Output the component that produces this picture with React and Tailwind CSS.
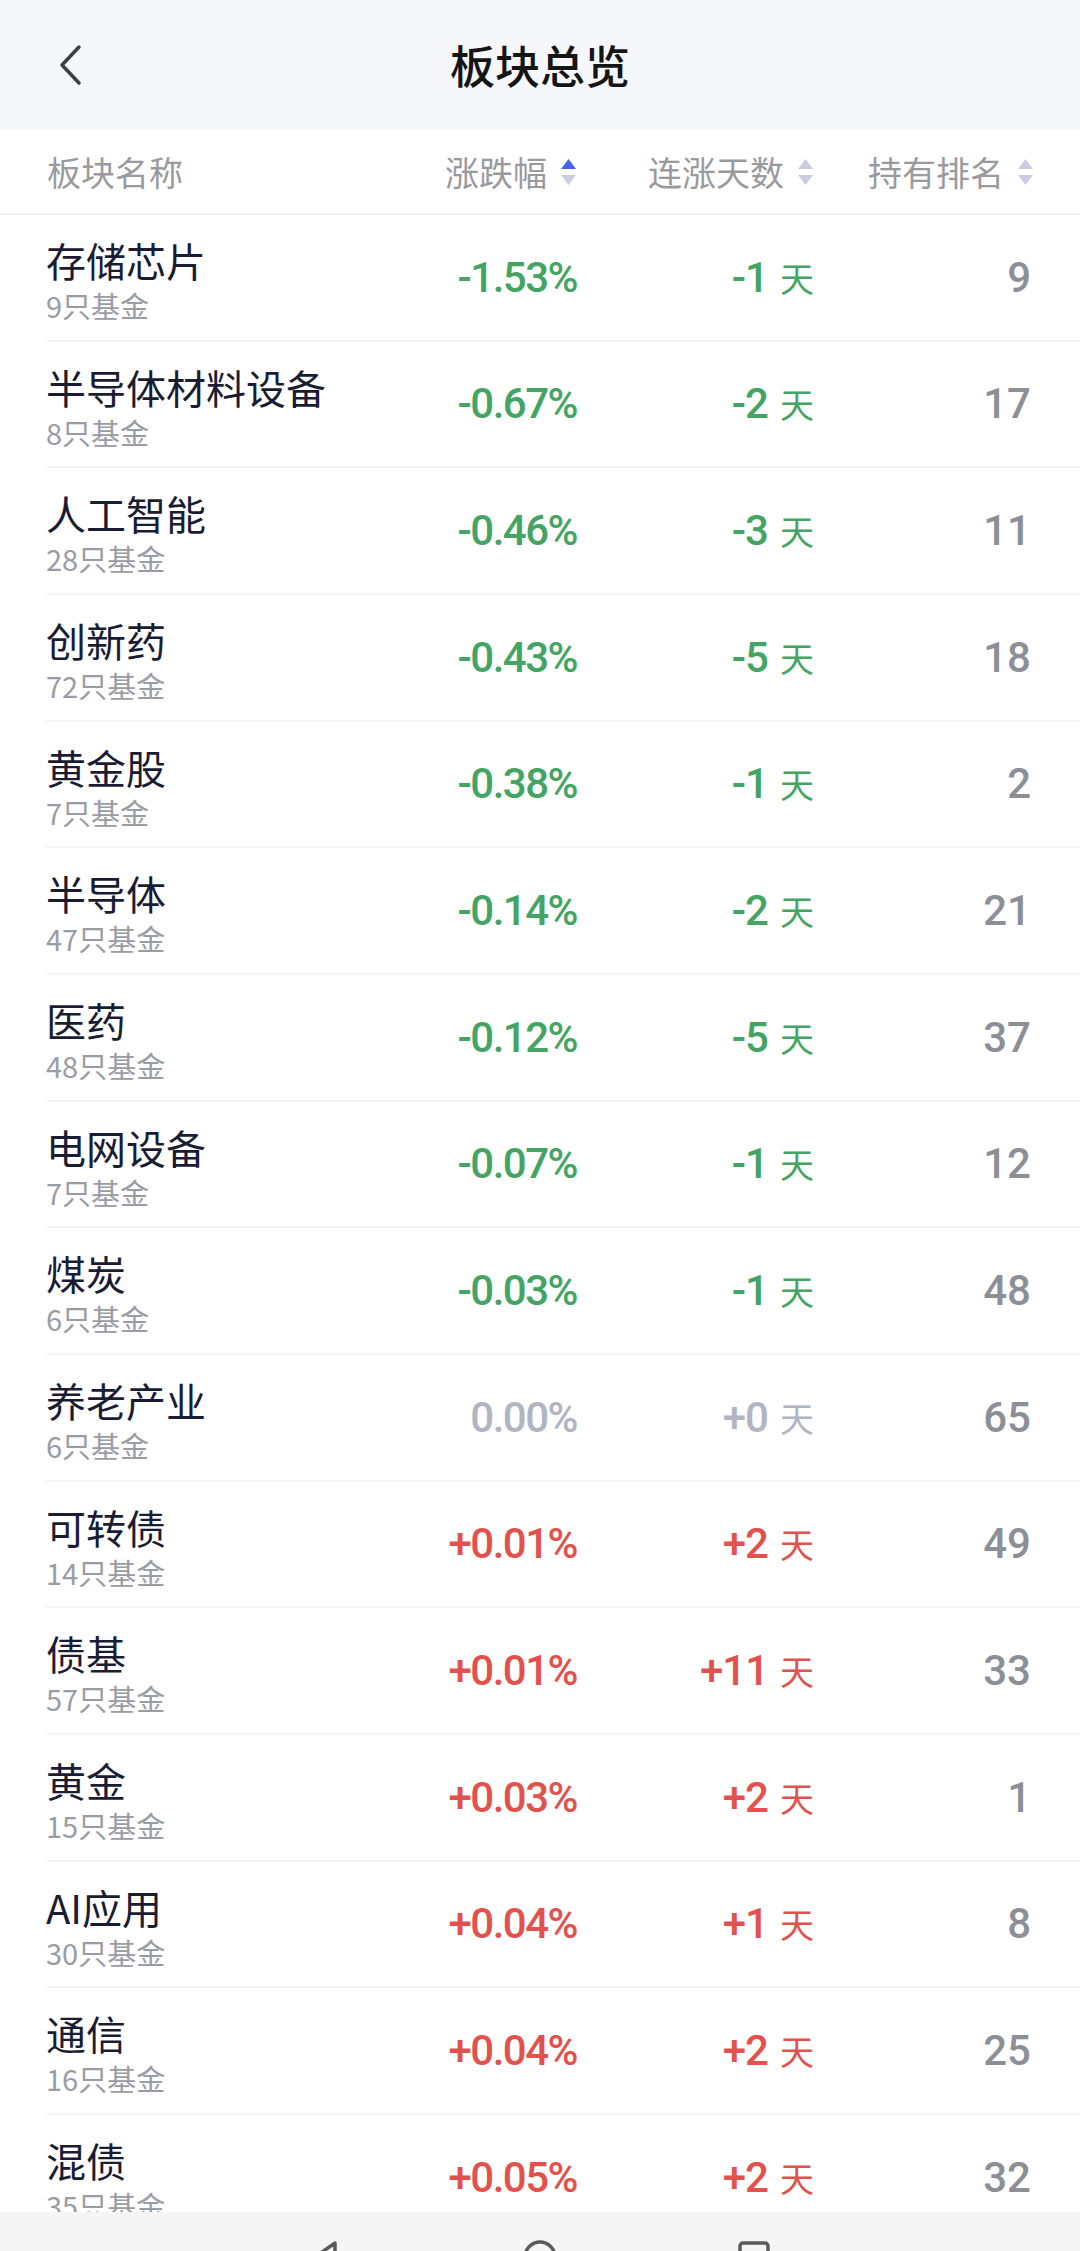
import React from 'react'

const rows = [
    ['存储芯片', '9只基金', '-1.53%', '-1', '9'],
    ['半导体材料设备', '8只基金', '-0.67%', '-2', '17'],
    ['人工智能', '28只基金', '-0.46%', '-3', '11'],
    ['创新药', '72只基金', '-0.43%', '-5', '18'],
    ['黄金股', '7只基金', '-0.38%', '-1', '2'],
    ['半导体', '47只基金', '-0.14%', '-2', '21'],
    ['医药', '48只基金', '-0.12%', '-5', '37'],
    ['电网设备', '7只基金', '-0.07%', '-1', '12'],
    ['煤炭', '6只基金', '-0.03%', '-1', '48'],
    ['养老产业', '6只基金', '0.00%', '+0', '65'],
    ['可转债', '14只基金', '+0.01%', '+2', '49'],
    ['债基', '57只基金', '+0.01%', '+11', '33'],
    ['黄金', '15只基金', '+0.03%', '+2', '1'],
    ['AI应用', '30只基金', '+0.04%', '+1', '8'],
    ['通信', '16只基金', '+0.04%', '+2', '25'],
    ['混债', '35只基金', '+0.05%', '+2', '32'],
]

const cjk = { fontFamily: '"Noto Sans CJK SC", "Noto Sans", sans-serif' }
const num = { fontFamily: 'Roboto, "Noto Sans CJK SC", sans-serif' }

function SortIcon({ active }) {
    return (
        <svg width="17" height="30" viewBox="0 0 17 30" className="ml-[13px]">
            <path d="M8.5 2 L16 12 L1 12 Z" fill={active ? '#4263eb' : '#c9cce2'} />
            <path d="M1 18 L16 18 L8.5 28 Z" fill="#c9cce2" />
        </svg>
    )
}

function colorOf(v) {
    if (v.startsWith('-')) return 'text-[#44a463]'
    if (v.startsWith('+')) return 'text-[#e2514c]'
    return 'text-[#b0b5c1]'
}

function Row({ row }) {
    const [name, sub, pct, days, rank] = row
    const c = colorOf(pct)
    return (
        <div className="pl-[46px] shrink-0">
            <div className="h-[126.67px] flex items-center border-b-2 border-[#f4f5f7] pr-[49px]">
                <div className="flex-1 self-start pt-[22px]" style={cjk}>
                    <div className="text-[40px] leading-[47px] text-[#191c33]">{name}</div>
                    <div className="text-[29px] leading-[42px] text-[#9a9ca4]">{sub}</div>
                </div>
                <div className={`w-[240px] text-right text-[42px] font-medium tracking-[-1.5px] ${c}`} style={num}>{pct}</div>
                <div className={`w-[237px] flex justify-end items-baseline ${c}`}>
                    <span className="text-[42px] font-medium tracking-[-1px]" style={num}>{days}</span>
                    <span className="text-[34px] ml-[12px]" style={cjk}>天</span>
                </div>
                <div className="w-[217px] text-right text-[42px] font-medium text-[#8d8f97]" style={num}>{rank}</div>
            </div>
        </div>
    )
}

export default function App() {
    return (
        <div className="w-[1080px] h-[2251px] flex flex-col overflow-hidden bg-white">
            <div className="h-[130px] shrink-0 bg-[#f6f7fb] flex items-center relative">
                <svg width="26" height="42" viewBox="0 0 26 42" className="ml-[57px]">
                    <path d="M22 3 L5 21 L22 39" fill="none" stroke="#3d3f46" strokeWidth="3.5" strokeLinecap="round" strokeLinejoin="round" />
                </svg>
                <div className="absolute inset-0 flex items-center justify-center text-[45px] font-medium text-[#151515]" style={cjk}>板块总览</div>
            </div>
            <div className="h-[85px] shrink-0 flex items-center border-b-2 border-[#f0f1f3] pl-[47px] pr-[46px] text-[34px] text-[#9a9a9e]" style={cjk}>
                <div className="flex-1">板块名称</div>
                <div className="w-[240px] flex justify-end items-center">涨跌幅<SortIcon active /></div>
                <div className="w-[237px] flex justify-end items-center">连涨天数<SortIcon /></div>
                <div className="w-[220px] flex justify-end items-center">持有排名<SortIcon /></div>
            </div>
            <div className="flex-1 overflow-hidden flex flex-col">
                {rows.map((r) => <Row key={r[0]} row={r} />)}
            </div>
            <div className="h-[39px] shrink-0 bg-[#f5f5f5] flex justify-center items-start pt-[28px] gap-[180px] overflow-hidden">
                <svg width="34" height="34" viewBox="0 0 34 34">
                    <path d="M26 3 L6 17 L26 31 Z" fill="none" stroke="#5a5a5a" strokeWidth="3.5" strokeLinejoin="round" />
                </svg>
                <svg width="34" height="34" viewBox="0 0 34 34">
                    <circle cx="17" cy="17" r="15" fill="none" stroke="#5a5a5a" strokeWidth="3.5" />
                </svg>
                <svg width="34" height="34" viewBox="0 0 34 34">
                    <rect x="3" y="3" width="28" height="28" rx="3" fill="none" stroke="#5a5a5a" strokeWidth="3.5" />
                </svg>
            </div>
        </div>
    )
}
